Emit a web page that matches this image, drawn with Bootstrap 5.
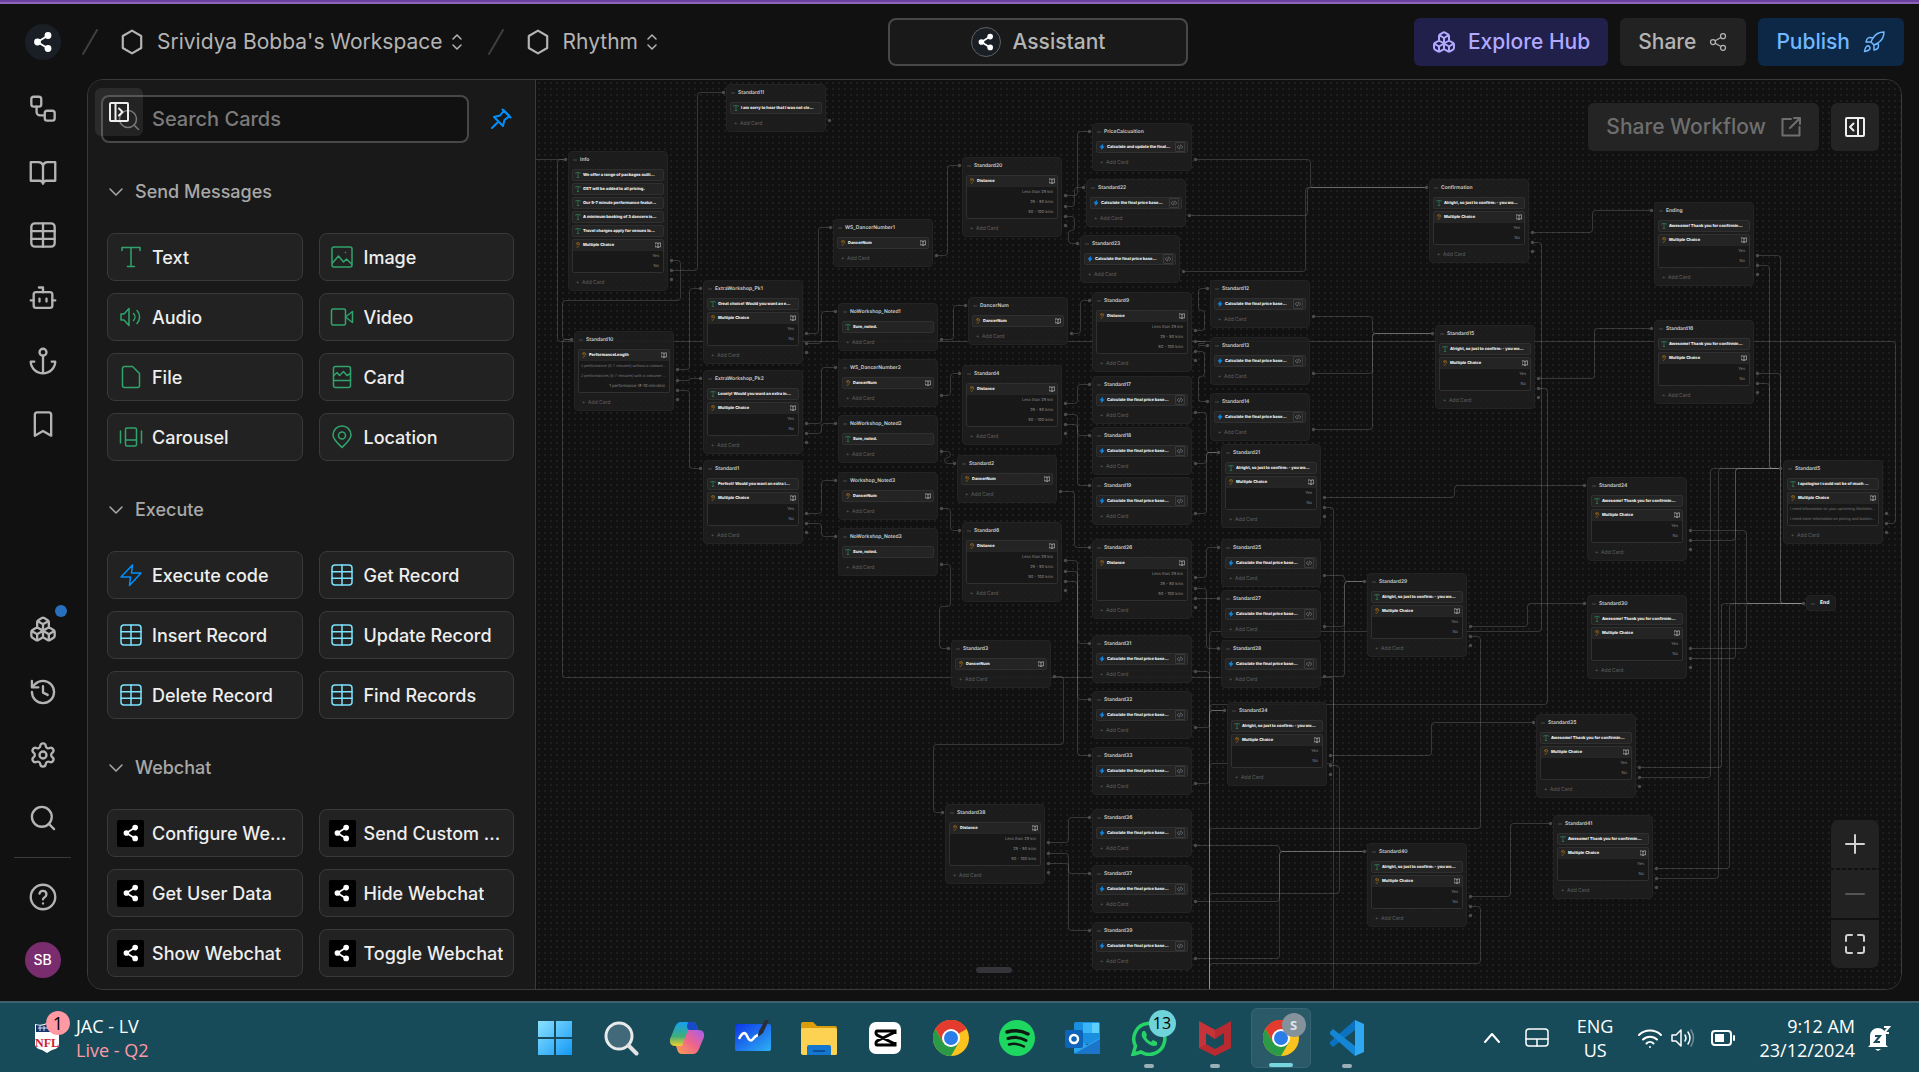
<!DOCTYPE html>
<html lang="en" data-bs-theme="dark">
<head>
<meta charset="utf-8">
<meta name="viewport" content="width=device-width, initial-scale=1">
<title>Rhythm - Workflow Studio</title>
<link href="https://cdn.jsdelivr.net/npm/bootstrap@5.3.0/dist/css/bootstrap.min.css" rel="stylesheet">
<style>
  :root { --ink:#eeeeee; --soft:#b4b4b4; --line:#3a3a3a; --panel:#191919; --tile:#222222; --page:#111111; --green:#30a46c; --blue:#0090ff; --sky:#7ce2fe; }
  body { background:var(--page); color:var(--soft); font-family:Inter,"Liberation Sans",sans-serif; font-size:18px; line-height:28px; overflow:hidden; }
  svg { display:block; flex:none; }
  .ico { fill:none; stroke:currentColor; stroke-width:2; stroke-linecap:round; stroke-linejoin:round; }
  .thin { stroke-width:1.5; }
  .s20 { width:20px; height:20px; } .s24 { width:24px; height:24px; } .s28 { width:28px; height:28px; }
  button { font-family:inherit; }
  .btn { --bs-btn-border-width:0; }
  .plain { background:none; border:0; padding:0; color:inherit; }

  .topstrip { height:4px; background:#6a40a0; border-bottom:2px solid #8b68b6; }
  .topbar { height:75px; padding:14px 15px 13px 25px; font-size:21px; font-weight:500; }
  .side-l { flex:1 1 0; } .side-r { flex:1 1 0; }
  .brandmark { width:36px; height:36px; border-radius:50%; background:#1a1f26; color:#fff; }
  .crumb-gap { margin-left:21px; margin-right:21px; color:#3f3f3f; }
  .assist { width:300px; height:48px; border:2px solid #484848; border-radius:8px; background:var(--panel); color:var(--soft); font-size:21px; font-weight:500; margin-left:147px; }
  .assist-mark { width:30px; height:30px; border-radius:50%; background:#1a1f26; border:1px solid #606060; color:#fff; }
  .bar-btn { height:48px; padding:0 18px; border-radius:6px; font-size:21px; font-weight:500; }
  .hub { background:#20204a; color:#b1a9ff; } .share { background:var(--tile); color:var(--soft); } .publish { background:#0d2847; color:#70b8ff; }

  .rail { width:87px; padding:16px 2px 23px 0; }
  .rail .plain { height:28px; }
  .rail-top { gap:35px; } .rail-end { gap:35px; }
  .rail-rule { width:57px; height:1px; background:var(--line); margin:25px 0; }
  .dot { position:absolute; width:12px; height:12px; border-radius:50%; background:#2870bd; right:-10px; top:-10px; }
  .face { width:36px; height:36px; border-radius:50%; background:#7a2d6e; color:#fff; font-size:14px; font-weight:500; margin-top:31px; }

  .studio { border:1px solid var(--line); border-radius:16px; overflow:hidden; margin:0 17px 11px 0; }
  .palette { width:448px; background:var(--panel); border-right:1px solid var(--line); padding:15px 21px 0 13px; position:relative; }
  .find { height:48px; border:2px solid #484848; border-radius:8px; background:#111; color:var(--ink); font-size:20px; padding:0 12px 0 49px; }
  .find::placeholder { color:#7b7b7b; opacity:1; font-weight:500; }
  .find-wrap { width:368px; }
  .glass { position:absolute; left:16px; top:13px; color:#6e6e6e; }
  .expand { position:absolute; left:7px; top:8px; width:48px; height:48px; border-radius:6px; background:rgba(255,255,255,.08); color:var(--ink); padding:14px; }
  .pin { color:var(--blue); margin-left:20px; }
  .group { margin:35px 0 27px 8px; font-size:18px; font-weight:500; color:#a8a8a8; line-height:28px; }
  .tiles { display:grid; grid-template-columns:1fr 1fr; gap:12px 16px; margin-left:6px; }
  .tile { height:48px; border:1px solid var(--line); border-radius:8px; background:var(--tile); color:var(--ink); font-size:18px; font-weight:500; padding:0 9px; gap:8px; min-width:0; }
  .tile .slot { width:27px; height:27px; display:flex; align-items:center; justify-content:center; flex:none; }
  .c-green { color:var(--green); } .c-blue { color:var(--blue); } .c-sky { color:var(--sky); }
  .c-chat { background:#000; color:#fff; border-radius:2px; }

  .stage { background-color:var(--page); background-image:radial-gradient(circle,#1f1f1f 1px,transparent 1px); background-size:6px 6px; position:relative; overflow:hidden; min-width:0; }
  .wires { position:absolute; left:0; top:0; width:100%; height:100%; fill:none; }
  .wires path { stroke:rgba(180,180,180,.23); stroke-width:1; }
  .wires circle { fill:#4c4c4c; }
  .node { position:absolute; width:100px; background:rgba(30,30,30,.9); border:1px solid #232323; border-radius:4px; padding:0 3px; font-size:4px; line-height:10px; color:#f2f2f2; text-rendering:geometricPrecision; }
  .node-name { height:17px; line-height:16px; font-size:5px; font-weight:600; padding-left:8px; color:#d0d0d0; position:relative; white-space:nowrap; }
  .node-name::before { content:""; position:absolute; left:1px; top:7px; width:4px; height:2px; background:#333; }
  .step { border:1px solid #303030; border-radius:2px; background:#242424; margin-bottom:2px; overflow:hidden; }
  .step:last-of-type { margin-bottom:0; }
  .step-row { height:10px; padding:0 2px; font-weight:800; white-space:nowrap; }
  .step svg { width:6px; height:6px; }
  .step-row > span { margin-left:2px; flex:1; }
  .picks { background:#181818; border-top:1px solid #262626; padding-bottom:1px; color:#8c8c8c; text-align:right; }
  .picks div { height:10px; padding:0 4px; white-space:nowrap; }
  .picks .longpick { text-align:left; padding:0 2px; font-family:"Liberation Sans",sans-serif; color:#777; }
  .codebox { border:1px solid #3a3a3a; border-radius:1px; padding:1px; color:#9a9a9a; }
  .addcard { display:block; height:17px; line-height:16px; font-size:5px; padding-left:4px; color:#606060; }
  .t-green { color:var(--green); } .t-ear { color:#c98212; } .t-blue { color:#1285dd; }
  .node.finish { width:30px; height:16px; }
  .finish .node-name { padding-left:10px; color:#fff; font-weight:700; line-height:15px; }
  .stage-tools { position:absolute; right:22px; top:23px; gap:12px; }
  .stage-btn { height:48px; border-radius:6px; background:rgba(38,38,38,.95); color:#6e6e6e; font-size:21px; font-weight:500; padding:0 18px; gap:15px; }
  .stage-btn.square { width:48px; padding:0 14px; color:var(--ink); }
  .zoomers { position:absolute; right:22px; bottom:21px; width:48px; border-radius:8px; overflow:hidden; gap:2px; }
  .zoomers button { height:48px; border:0; background:#222; color:#d0d0d0; padding:12px; }
  .zoomers button:disabled { color:#555; }
  .grip { position:absolute; left:440px; bottom:16px; width:36px; height:6px; border-radius:3px; background:#34343a; }

  .taskbar { background:#184b5a; border-top:2px solid #3e606c; height:71px; font-family:"Open Sans","Noto Sans",sans-serif; color:#fff; font-size:18px; line-height:24px; }
  .news { flex:1 1 0; padding-left:34px; gap:8px; }
  .news-art { position:relative; width:34px; height:44px; padding-top:6px; }
  .news-count { position:absolute; left:12px; top:-5px; width:24px; height:24px; border-radius:50%; background:#ff99a4; color:#000; text-align:center; font-size:18px; }
  .pinkish { color:#ff99a4; }
  .apps { gap:6px; margin-right:24px; }
  .app { position:relative; width:60px; height:60px; border-radius:6px; display:flex; align-items:center; justify-content:center; }
  .app svg { width:36px; height:36px; }
  .app.open { background:#2a5968; border:1px solid #386573; }
  .app.run::after, .app.open::after { content:""; position:absolute; bottom:0; width:10px; height:4px; border-radius:2px; background:#9ab0b6; }
  .app.open::after { width:24px; background:#76d5dd; }
  .bubble { position:absolute; right:3px; top:2px; width:27px; height:27px; border-radius:50%; background:#6fd3da; color:#000; font-size:16px; line-height:26px; text-align:center; }
  .bubble.grey { background:#84939b; color:#dfe5e7; font-size:13px; font-weight:700; width:24px; height:24px; line-height:24px; top:4px; right:4px; }
  .tray { flex:1 1 0; justify-content:flex-end; padding-right:28px; }
</style>
<script src="https://cdn.jsdelivr.net/npm/bootstrap@5.3.0/dist/js/bootstrap.bundle.min.js"></script>
</head>
<body class="d-flex flex-column vh-100">

<svg width="0" height="0" class="position-absolute" aria-hidden="true">
  <symbol id="hex" viewBox="0 0 24 24"><path d="M12 1.500 20.500 6.500v11L12 22.500 3.500 17.500v-11z"/></symbol>
  <symbol id="sort" viewBox="0 0 12 18"><path d="M2 6l4-4 4 4M2 12l4 4 4-4"/></symbol>
  <symbol id="slash" viewBox="0 0 16 26"><path d="M15 1 1 25"/></symbol>
  <symbol id="mark" viewBox="0 0 24 24"><g fill="currentColor" stroke="none"><circle cx="6.500" cy="12" r="3.400"/><circle cx="17" cy="5.500" r="3.400"/><circle cx="17" cy="18.500" r="3.400"/></g><path d="M17 5.500 6.500 12 17 18.500"/></symbol>
  <symbol id="nodes" viewBox="0 0 24 24"><circle cx="18" cy="5" r="3"/><circle cx="6" cy="12" r="3"/><circle cx="18" cy="19" r="3"/><path d="m8.600 13.500 6.800 4M15.400 6.500l-6.800 4"/></symbol>
  <symbol id="boxes" viewBox="0 0 24 24"><path d="M2.970 12.920A2 2 0 0 0 2 14.630v3.240a2 2 0 0 0 .970 1.710l3 1.800a2 2 0 0 0 2.060 0L12 19v-5.500l-5-3-4.030 2.420ZM7 16.500l-4.740-2.850M7 16.500l5-3M7 16.500v5.170M12 13.500V19l3.970 2.380a2 2 0 0 0 2.060 0l3-1.800a2 2 0 0 0 .970-1.710v-3.240a2 2 0 0 0-.970-1.710L17 10.500l-5 3ZM17 16.500l-5-3M17 16.500l4.740-2.850M17 16.500v5.170M7.970 4.420A2 2 0 0 0 7 6.130v4.370l5 3 5-3V6.130a2 2 0 0 0-.970-1.710l-3-1.800a2 2 0 0 0-2.060 0l-3 1.800ZM12 8 7.260 5.150M12 8l4.740-2.850M12 13.500V8"/></symbol>
  <symbol id="rocket" viewBox="0 0 24 24"><path d="M4.500 16.500c-1.500 1.260-2 5-2 5s3.740-.5 5-2c.71-.84.7-2.130-.09-2.910a2.180 2.180 0 0 0-2.910-.09zM12 15l-3-3a22 22 0 0 1 2-3.950A12.880 12.880 0 0 1 22 2c0 2.720-.78 7.500-6 11a22.350 22.350 0 0 1-4 2zM9 12H4s.55-3.030 2-4c1.620-1.080 5 0 5 0M12 15v5s3.030-.55 4-2c1.080-1.620 0-5 0-5"/></symbol>
  <symbol id="flow" viewBox="0 0 24 24"><rect x="2" y="1.500" width="8.500" height="8.500" rx="2"/><path d="M6.500 10v4.500a3 3 0 0 0 3 3h4"/><rect x="13.500" y="13.500" width="8.500" height="8.500" rx="2"/></symbol>
  <symbol id="book" viewBox="0 0 24 24"><path d="M1.500 3.500h6.500a4 4 0 0 1 4 3 4 4 0 0 1 4-3h6.500v16h-7.500a3 3 0 0 0-3 2.500 3 3 0 0 0-3-2.500H1.500zM12 6.500V22"/></symbol>
  <symbol id="table" viewBox="0 0 24 24"><rect x="2" y="2" width="20" height="20" rx="3"/><path d="M12 2v20M2 8.700h20M2 15.300h20"/></symbol>
  <symbol id="bot" viewBox="0 0 24 24"><path d="M12 7V3H8.500"/><rect x="4" y="7" width="16" height="13.500" rx="2"/><path d="M1.500 14H4M20 14h2.500M9 12.500v2.500M15 12.500v2.500"/></symbol>
  <symbol id="anchor" viewBox="0 0 24 24"><circle cx="12" cy="4.500" r="3"/><path d="M12 22.500v-15M4.500 12.500H1.500a10.500 10 0 0 0 21 0h-3"/></symbol>
  <symbol id="bookmark" viewBox="0 0 24 24"><path d="m19 22-7-4-7 4V4a2 2 0 0 1 2-2h10a2 2 0 0 1 2 2z"/></symbol>
  <symbol id="history" viewBox="0 0 24 24"><path d="M2.500 12a9.500 9.500 0 1 0 9.500-9.500 10.300 10.300 0 0 0-7 2.900L2.500 8M2.500 2.500V8H8M12 7v5.500l4 2"/></symbol>
  <symbol id="gear" viewBox="0 0 24 24"><path d="M9.671 4.136a2.340 2.340 0 0 1 4.659 0 2.340 2.340 0 0 0 3.319 1.915 2.340 2.340 0 0 1 2.330 4.033 2.340 2.340 0 0 0 0 3.831 2.340 2.340 0 0 1-2.330 4.033 2.340 2.340 0 0 0-3.319 1.915 2.340 2.340 0 0 1-4.659 0 2.340 2.340 0 0 0-3.320-1.915 2.340 2.340 0 0 1-2.330-4.033 2.340 2.340 0 0 0 0-3.831A2.340 2.340 0 0 1 6.350 6.051a2.340 2.340 0 0 0 3.319-1.915"/><circle cx="12" cy="12" r="3"/></symbol>
  <symbol id="search" viewBox="0 0 24 24"><circle cx="11" cy="11" r="8.500"/><path d="m21.500 21.500-4.500-4.500"/></symbol>
  <symbol id="help" viewBox="0 0 24 24"><circle cx="12" cy="12" r="10.500"/><path d="M9 9a3 3 0 0 1 5.900 1c0 2-2.900 2.500-2.900 4M12 17.400v.1"/></symbol>
  <symbol id="pin" viewBox="0 0 24 24"><path d="m15 3.500-4 5-6 1.500 9 9 1.500-6 5-4zM9 15l-6 6M13.500 2.500l8 8"/></symbol>
  <symbol id="chev" viewBox="0 0 14 14"><path d="m1 4 6 6 6-6"/></symbol>
  <symbol id="openpane" viewBox="0 0 20 20"><rect x="1" y="1" width="18" height="18" rx="1"/><path d="M6.500 1v18M10 6.500l3.500 3.500-3.500 3.500"/></symbol>
  <symbol id="closepane" viewBox="0 0 20 20"><rect x="1" y="1" width="18" height="18" rx="1"/><path d="M13 1v18M8.500 6.500 5 10l3.500 3.500"/></symbol>
  <symbol id="leave" viewBox="0 0 20 20"><path d="M10 2H1.500v16.500h17V10M13 1h6v6M19 1 9 11"/></symbol>
  <symbol id="tee" viewBox="0 0 24 24"><path d="M3 5.500V2.500h18v3M12 2.500v19M8.500 21.500h7"/></symbol>
  <symbol id="image" viewBox="0 0 24 24"><rect x="2" y="2" width="20" height="20" rx="2"/><path d="m2.500 18 6-7 5 6 3-3 5 5M15.500 7.500v.1"/></symbol>
  <symbol id="audio" viewBox="0 0 24 24"><path d="M2 9v6h3l5 5.500v-17L5 9zM14.500 8.500a5 5 0 0 1 0 7M18 5.500a9.500 9.500 0 0 1 0 13"/></symbol>
  <symbol id="video" viewBox="0 0 24 24"><rect x="1.500" y="4" width="14" height="16" rx="1.500"/><path d="m15.500 12 7-5.500v11z"/></symbol>
  <symbol id="file" viewBox="0 0 24 24"><path d="M3.500 3.500a2 2 0 0 1 2-2H13.500L20.500 8.500v12a2 2 0 0 1-2 2h-13a2 2 0 0 1-2-2z"/></symbol>
  <symbol id="cardpic" viewBox="0 0 24 24"><rect x="3.500" y="1.500" width="17" height="21" rx="2"/><path d="M3.500 15.500h17M3.500 11l3.500-3.500 2.500 3 4-4 3.500 4 3.500-2"/></symbol>
  <symbol id="carousel" viewBox="0 0 24 24"><rect x="6.500" y="3" width="11" height="18" rx="1.500"/><path d="M6.500 15h11M1.500 6v12M22.500 6v12"/></symbol>
  <symbol id="place" viewBox="0 0 24 24"><path d="M12 22.500c4-4 9-8 9-12.500a9 9 0 0 0-18 0c0 4.500 5 8.500 9 12.500z"/><circle cx="12" cy="10.500" r="3.500"/></symbol>
  <symbol id="bolt" viewBox="0 0 24 24"><path d="M13.500 2 2 14h9.500l-1 8.500L22 10h-9.500z"/></symbol>
  <symbol id="spark" viewBox="0 0 24 24"><path fill="currentColor" d="M14 2 3 12l6 2 1 8L21 11l-6-2z"/></symbol>
  <symbol id="ear" viewBox="0 0 24 24"><path d="M5 8a7 7 0 0 1 14 1c0 6-6 6-6 10a3.500 3.500 0 0 1-6 1.500M15 9a3 3 0 0 0-6 0c2 .5 2 3 0 4"/></symbol>
  <symbol id="code" viewBox="0 0 24 24"><path d="m6 6-5 6 5 6M18 6l5 6-5 6M14 4l-4 16"/></symbol>
  <symbol id="plus" viewBox="0 0 24 24"><path d="M12 3v18M3 12h18"/></symbol>
  <symbol id="minus" viewBox="0 0 24 24"><path d="M3 12h18"/></symbol>
  <symbol id="fit" viewBox="0 0 24 24"><path d="M3 9V5a2 2 0 0 1 2-2h4M15 3h4a2 2 0 0 1 2 2v4M21 15v4a2 2 0 0 1-2 2h-4M9 21H5a2 2 0 0 1-2-2v-4"/></symbol>
  <symbol id="chrome" viewBox="0 0 36 36"><circle cx="18" cy="18" r="18" fill="#fcc31e"/><path d="M18 18 2.400 9A18 18 0 0 1 33.600 9z" fill="#e33b2e"/><path d="M18 9h15.600A18 18 0 0 0 2.400 9L10.200 22.500z" fill="#e33b2e"/><path d="M2.400 9a18 18 0 0 0 15.600 27l7.800-13.500L18 18l-7.800 4.500z" fill="#2a9a47"/><circle cx="18" cy="18" r="9" fill="#fff"/><circle cx="18" cy="18" r="7" fill="#2b7de9"/></symbol>
</svg>

<div class="topstrip"></div>
<header class="topbar d-flex align-items-center">
  <div class="side-l d-flex align-items-center">
    <a href="#" class="brandmark d-flex align-items-center justify-content-center" aria-label="Home"><svg class="ico s24"><use href="#mark"/></svg></a>
    <svg class="ico crumb-gap" width="16" height="26"><use href="#slash"/></svg>
    <button class="plain d-flex align-items-center"><svg class="ico me-2" width="26" height="26"><use href="#hex"/></svg><span class="ms-1">Srividya Bobba's Workspace</span><svg class="ico thin ms-2 me-1" width="12" height="18"><use href="#sort"/></svg></button>
    <svg class="ico crumb-gap" width="16" height="26"><use href="#slash"/></svg>
    <button class="plain d-flex align-items-center"><svg class="ico me-2" width="26" height="26"><use href="#hex"/></svg><span class="ms-1">Rhythm</span><svg class="ico thin ms-2 me-1" width="12" height="18"><use href="#sort"/></svg></button>
  </div>
  <button class="assist d-flex align-items-center justify-content-center"><span class="assist-mark d-flex align-items-center justify-content-center me-2"><svg class="ico s20"><use href="#mark"/></svg></span><span class="ms-1">Assistant</span></button>
  <div class="side-r d-flex justify-content-end gap-2">
    <button class="btn bar-btn hub d-flex align-items-center me-1"><svg class="ico s24 me-2"><use href="#boxes"/></svg><span class="ms-1">Explore Hub</span></button>
    <button class="btn bar-btn share d-flex align-items-center me-1"><span class="me-2">Share</span><svg class="ico thin s20 ms-1"><use href="#nodes"/></svg></button>
    <button class="btn bar-btn publish d-flex align-items-center"><span class="me-2">Publish</span><svg class="ico thin s24 ms-1"><use href="#rocket"/></svg></button>
  </div>
</header>

<main class="d-flex flex-grow-1 overflow-hidden">
  <nav class="rail d-flex flex-column align-items-center flex-shrink-0">
    <div class="rail-top d-flex flex-column align-items-center">
      <button class="plain" aria-label="Workflows"><svg class="ico s28"><use href="#flow"/></svg></button>
      <button class="plain" aria-label="Knowledge bases"><svg class="ico s28"><use href="#book"/></svg></button>
      <button class="plain" aria-label="Tables"><svg class="ico s28"><use href="#table"/></svg></button>
      <button class="plain" aria-label="Agents"><svg class="ico s28"><use href="#bot"/></svg></button>
      <button class="plain" aria-label="Hooks"><svg class="ico s28"><use href="#anchor"/></svg></button>
      <button class="plain" aria-label="Library"><svg class="ico s28"><use href="#bookmark"/></svg></button>
    </div>
    <div class="rail-end d-flex flex-column align-items-center mt-auto">
      <button class="plain position-relative" aria-label="Hub"><svg class="ico s28"><use href="#boxes"/></svg><span class="dot"></span></button>
      <button class="plain" aria-label="Version history"><svg class="ico s28"><use href="#history"/></svg></button>
      <button class="plain" aria-label="Settings"><svg class="ico s28"><use href="#gear"/></svg></button>
      <button class="plain" aria-label="Search"><svg class="ico s28"><use href="#search"/></svg></button>
    </div>
    <div class="rail-rule"></div>
    <button class="plain" aria-label="Help"><svg class="ico s28"><use href="#help"/></svg></button>
    <div class="face d-flex align-items-center justify-content-center">SB</div>
  </nav>

  <div class="studio d-flex flex-grow-1">
    <aside class="palette flex-shrink-0">
      <div class="d-flex align-items-center">
        <div class="find-wrap position-relative">
          <input id="find" type="text" class="find w-100 d-block" placeholder="Search Cards">
          <label class="glass" for="find" aria-label="Search Cards"><svg class="ico thin s24"><use href="#search"/></svg></label>
        </div>
        <button class="plain pin" aria-label="Pin panel"><svg class="ico s24"><use href="#pin"/></svg></button>
      </div>
      <button class="btn expand" aria-label="Expand explorer"><svg class="ico s20"><use href="#openpane"/></svg></button>
      <div id="groups"></div>
    </aside>
    <section class="stage flex-grow-1" id="stage" aria-label="Workflow canvas">
      <svg class="wires" id="wires"></svg>
      <div class="stage-tools d-flex">
        <button class="btn stage-btn d-flex align-items-center">Share Workflow<svg class="ico s20"><use href="#leave"/></svg></button>
        <button class="btn stage-btn square d-flex align-items-center" aria-label="Toggle inspector"><svg class="ico s20"><use href="#closepane"/></svg></button>
      </div>
      <div class="zoomers d-flex flex-column">
        <button aria-label="Zoom in"><svg class="ico s24"><use href="#plus"/></svg></button>
        <button aria-label="Zoom out" disabled><svg class="ico s24"><use href="#minus"/></svg></button>
        <button aria-label="Fit to screen"><svg class="ico s24"><use href="#fit"/></svg></button>
      </div>
      <div class="grip"></div>
    </section>
  </div>
</main>

<footer class="taskbar d-flex align-items-center flex-shrink-0">
  <div class="news d-flex align-items-center">
    <div class="news-art">
      <svg width="26" height="32" viewBox="0 0 26 32"><path d="M1 2q6 2 12-1 6 3 12 1v21q-1 4-7 5l-5 3-5-3q-6-1-7-5z" fill="#fff"/><path d="M2 3q6 2 11-1 6 3 11 1v7H2z" fill="#16356e"/><path d="M4 6h18M6 4v5M10 4v5" stroke="#dbe3f0"/><text x="13" y="25" text-anchor="middle" font-family="Liberation Serif,serif" font-weight="700" font-size="12" fill="#d0202e">NFL</text></svg>
      <span class="news-count">1</span>
    </div>
    <div><div>JAC - LV</div><div class="pinkish">Live - Q2</div></div>
  </div>
  <div class="apps d-flex align-items-center">
    <a class="app" href="#" aria-label="Start"><svg viewBox="0 0 36 36"><defs><linearGradient id="win" x1="0" y1="0" x2="1" y2="1"><stop offset="0" stop-color="#8be1ff"/><stop offset="1" stop-color="#1399f5"/></linearGradient></defs><path fill="url(#win)" d="M1 1h16v16H1zM19 1h16v16H19zM1 19h16v16H1zM19 19h16v16H19z"/></svg></a>
    <a class="app" href="#" aria-label="Search"><svg viewBox="0 0 36 36" fill="none"><circle cx="16" cy="16" r="13" fill="#41697a" stroke="#e8eaeb" stroke-width="3"/><path d="m25.500 25.500 8 8" stroke="#e0e2e3" stroke-width="4" stroke-linecap="round"/></svg></a>
    <a class="app" href="#" aria-label="Copilot"><svg viewBox="0 0 36 36"><defs><linearGradient id="cpa" x1="0" y1="0" x2="0" y2="1"><stop offset="0" stop-color="#14a0f5"/><stop offset=".6" stop-color="#3fae7a"/><stop offset="1" stop-color="#f2cf2c"/></linearGradient><linearGradient id="cpb" x1="1" y1="0" x2="0" y2="1"><stop offset="0" stop-color="#a45cf0"/><stop offset=".5" stop-color="#f0648c"/><stop offset="1" stop-color="#ffa14a"/></linearGradient></defs><path d="M12 2h11q4 0 5 5l1 3h-6L17 26H6q-6 0-5-7L6 7q2-5 6-5z" fill="url(#cpa)"/><path d="M19 2h4q4 0 5 5l1 3h-8q-3 0-3-4z" fill="#1949c8"/><path d="M24 34H13q-4 0-5-5l-1-3h6l6-16h11q6 0 5 7l-5 12q-2 5-6 5z" fill="url(#cpb)"/></svg></a>
    <a class="app" href="#" aria-label="Whiteboard"><svg viewBox="0 0 36 36"><defs><linearGradient id="wb" x1="0" y1="0" x2="1" y2="1"><stop offset="0" stop-color="#0c35e8"/><stop offset="1" stop-color="#2fb1f4"/></linearGradient></defs><rect y="4" width="36" height="27" rx="2" fill="url(#wb)"/><path d="M4 19q5-10 8-3t6 3q2-3 5-4" fill="none" stroke="#fff" stroke-width="2.500"/><path d="M34 0 28 13l-5 4 1-6L30 0z" fill="#2b2c38"/></svg></a>
    <a class="app" href="#" aria-label="File Explorer"><svg viewBox="0 0 36 36"><path d="M0 4q0-2 2-2h10l4 4h18q2 0 2 2v6H0z" fill="#dc9d0c"/><path d="M0 34V10q0-2 2-2h32q2 0 2 2v24q0 1-2 1H2z" fill="#fdd252"/><path d="M6 35V27q0-2 2-2h20q2 0 2 2v8z" fill="#1377d0"/><path d="M12 30h12v2H12z" fill="#0d4f96"/></svg></a>
    <a class="app" href="#" aria-label="CapCut"><svg viewBox="0 0 36 36"><rect x="2" y="2" width="32" height="32" rx="7" fill="#fff"/><path d="M28 14V11H10q-1 0-1 2 0 1 1 2l18 9M28 22v3H10q-1 0-1-2 0-1 1-2l18-9" fill="none" stroke="#000" stroke-width="3"/></svg></a>
    <a class="app" href="#" aria-label="Chrome"><svg><use href="#chrome"/></svg></a>
    <a class="app" href="#" aria-label="Spotify"><svg viewBox="0 0 36 36"><circle cx="18" cy="18" r="18" fill="#1ed760"/><g fill="none" stroke="#0c1a10" stroke-linecap="round"><path d="M8 12q11-3.500 21 2" stroke-width="3.500"/><path d="M9 18.500q10-3 18 2" stroke-width="3"/><path d="M10 24.500q8-2 15 2" stroke-width="2.500"/></g></svg></a>
    <a class="app" href="#" aria-label="Outlook"><svg viewBox="0 0 36 36"><rect x="9" y="2" width="26" height="22" rx="2" fill="#1a8fe0"/><path d="M18 3h9v10h-9z" fill="#38b6f5"/><path d="M27 3h7v10h-7z" fill="#5ccfff"/><path d="M9 18l13 7 13-7v14q0 2-2 2H11q-2 0-2-2z" fill="#2aa4ec"/><path d="M9 34 35 19v13q0 2-2 2z" fill="#1b76c9"/><rect x="0" y="10" width="18" height="18" rx="2" fill="#0d64b8"/><circle cx="9" cy="19" r="4" fill="none" stroke="#fff" stroke-width="2.500"/></svg></a>
    <a class="app run" href="#" aria-label="WhatsApp"><svg viewBox="0 0 36 36" fill="none" stroke="#25d366"><path d="M2 34.500 4.500 26A15.500 15.500 0 1 1 10 32z" stroke-width="3.500"/><path d="M12 11q-4 4 3 11 7 6 11 3v-3l-4-2-2 2q-4-2-5-5l1-2-2-4z" fill="#25d366" stroke="none"/></svg><span class="bubble">13</span></a>
    <a class="app run" href="#" aria-label="McAfee"><svg viewBox="0 0 36 36"><path d="M2 1l16 9 16-9v27l-16 8-16-8z" fill="#b62a30"/><path d="M9 13l9 6 9-6v11l-9 5-9-5z" fill="#184b5a"/><path d="M2 1l16 9v9L9 13v11l-7 4z" fill="#c63338"/></svg></a>
    <a class="app open" href="#" aria-label="Chrome, Rhythm"><svg><use href="#chrome"/></svg><span class="bubble grey">S</span></a>
    <a class="app run" href="#" aria-label="Visual Studio Code"><svg viewBox="0 0 36 36"><path d="M26 0l9 4v28l-9 4z" fill="#2fa8f2"/><path d="M26 0v10L4 27l-3-3v-2z" fill="#0b72c0"/><path d="M26 36V26L4 9l-3 3v2z" fill="#1486d6"/></svg></a>
  </div>
  <div class="tray d-flex align-items-center">
    <svg class="ico me-3" width="18" height="18"><path d="m2 13 7-8 7 8"/></svg>
    <svg class="ico thin ms-2 me-4" width="24" height="20"><rect x="1" y="1" width="22" height="17" rx="3"/><path d="M1 11h22M12 11v7"/></svg>
    <div class="text-center ms-1 me-4">ENG<br>US</div>
    <svg class="ico me-2" width="26" height="22"><path d="M2 8a16 16 0 0 1 22 0M6 12.500a10 10 0 0 1 14 0M9.500 16.500a5 5 0 0 1 7 0M13 20v.1"/></svg>
    <svg class="ico thin me-3" width="24" height="22"><path d="M1 8v6h4l5 5V3L5 8zM14 8q2 3 0 6M17 5q4 6 0 12"/><path d="M20 3q5 8 0 16" stroke="#6f8d96"/></svg>
    <svg class="ico me-4" width="24" height="18"><rect x="1" y="2" width="19" height="14" rx="3"/><rect x="4" y="5" width="9" height="8" fill="#fff" stroke="none"/><path d="M23 7v4"/></svg>
    <div class="text-end me-2">9:12 AM<br>23/12/2024</div>
    <svg class="ms-1" width="24" height="26" viewBox="0 0 24 26"><path d="M3 20V11a8 8 0 0 1 8-8q7 0 8 8v9l2 2H1zM8 24h6l-3 2z" fill="#fff"/><path d="M8 11h5l-5 6h5" fill="none" stroke="#184b5a" stroke-width="2"/><path d="M17 2h5l-5 6h5" fill="none" stroke="#fff" stroke-width="2"/></svg>
  </div>
</footer>

<script>
/* Card palette */
const groups = [
  ["Send Messages", [["tee","green","Text"],["image","green","Image"],["audio","green","Audio"],["video","green","Video"],["file","green","File"],["cardpic","green","Card"],["carousel","green","Carousel"],["place","green","Location"]]],
  ["Execute", [["bolt","blue","Execute code"],["table","sky","Get Record"],["table","sky","Insert Record"],["table","sky","Update Record"],["table","sky","Delete Record"],["table","sky","Find Records"]]],
  ["Webchat", [["mark","chat","Configure We..."],["mark","chat","Send Custom ..."],["mark","chat","Get User Data"],["mark","chat","Hide Webchat"],["mark","chat","Show Webchat"],["mark","chat","Toggle Webchat"]]]
];
const icon = (name, cls) => `<svg class="ico ${cls}" viewBox="0 0 24 24"><use href="#${name}"/></svg>`;
document.getElementById("groups").innerHTML = groups.map(([title, items]) =>
  `<button class="plain group d-flex align-items-center"><svg class="ico thin me-2" width="14" height="14"><use href="#chev"/></svg><span class="ms-1">${title}</span></button>
   <div class="tiles">${items.map(([i, c, t]) =>
    `<button class="btn tile d-flex align-items-center"><span class="slot c-${c}">${icon(i, c === "chat" ? "s20" : "s24 thin")}</span><span class="text-truncate">${t}</span></button>`).join("")}</div>`).join("");

/* Steps used by the nodes: [kind, label, choices] */
const dist = [["ear","Distance",["Less than 25 km","25 - 50 kms","50 - 100 kms"]]];
const num = [["ear","DancerNum"]];
const noted = [["tee","Sure, noted."]];
const calc = [["spark","Calculate the final price base..."]];
const yesNo = ["ear","Multiple Choice",["Yes","No"]];
const ask = t => [["tee", t], yesNo];
const confirmed = ask("Alright, so just to confirm: - you wo...");
const thanks = ask("Awesome! Thank you for confirmin...");

/* name: [x, y, steps] */
const pan = { x: 536, y: 80 };
const nodes = {
  Standard11:[726,84,[["tee","I am sorry to hear that I was not cle..."]]],
  Info:[568,151,[["tee","We offer a range of packages outli..."],["tee","GST will be added to all pricing."],["tee","Our 5-7 minute performance featur..."],["tee","A minimum booking of 3 dancers is..."],["tee","Travel charges apply for venues lo..."],yesNo]],
  Standard10:[574,331,[["ear","PerformanceLength",["1 performance (5-7 minutes) without a costum...","2 performances (5-7 minutes) with a costume ...","1 performance (8-10 minutes)"]]]],
  ExtraWorkshop_Pk1:[703,280,ask("Great choice! Would you want an e...")],
  ExtraWorkshop_Pk2:[703,370,ask("Lovely! Would you want an extra in...")],
  Standard1:[703,460,ask("Perfect! Would you want an extra i...")],
  WS_DancerNumber1:[833,219,num], NoWorkshop_Noted1:[838,303,noted], WS_DancerNumber2:[838,359,num],
  NoWorkshop_Noted2:[838,415,noted], Workshop_Noted3:[838,472,num], NoWorkshop_Noted3:[838,528,noted],
  Standard20:[962,157,dist], DancerNum:[968,297,num], Standard4:[962,365,dist], Standard2:[957,455,num],
  Standard6:[962,522,dist], Standard3:[951,640,num], Standard38:[945,804,dist],
  PriceCalcualtion:[1092,123,[["spark","Calculate and update the final..."]]],
  Standard22:[1086,179,calc], Standard23:[1080,235,calc], Standard9:[1092,292,dist],
  Standard12:[1210,280,calc], Standard13:[1210,337,calc], Standard14:[1210,393,calc],
  Standard17:[1092,376,calc], Standard18:[1092,427,calc], Standard19:[1092,477,calc],
  Standard21:[1221,444,confirmed], Standard26:[1092,539,dist],
  Standard25:[1221,539,calc], Standard27:[1221,590,calc], Standard28:[1221,640,calc],
  Standard31:[1092,635,calc], Standard32:[1092,691,calc], Standard33:[1092,747,calc],
  Standard34:[1227,702,confirmed], Standard36:[1092,809,calc], Standard37:[1092,865,calc], Standard39:[1092,922,calc],
  Standard40:[1367,843,confirmed], Standard29:[1367,573,confirmed], Confirmation:[1429,179,confirmed], Standard15:[1435,325,confirmed],
  Ending:[1654,202,thanks], Standard16:[1654,320,thanks], Standard24:[1587,477,thanks], Standard30:[1587,595,thanks],
  Standard35:[1536,714,thanks], Standard41:[1553,815,thanks],
  Standard5:[1783,460,[["tee","I apologise I could not be of much ..."],["ear","Multiple Choice",["I need information on your upcoming Worksho...","I need more information on pricing and bookin..."]]]],
  End:[1806,595,[]]
};
const tint = { tee:"t-green", ear:"t-ear", spark:"t-blue" };
const stepHtml = ([kind, label, picks]) => `<div class="step"><div class="step-row d-flex align-items-center">${icon(kind, tint[kind])}<span>${label}</span>${
  kind === "ear" ? icon("book", "") : kind === "spark" ? `<i class="codebox">${icon("code", "")}</i>` : ""}</div>${
  picks ? `<div class="picks">${picks.map(p => `<div class="${p.length > 40 ? "longpick" : ""}">${p}</div>`).join("")}</div>` : ""}</div>`;
document.getElementById("wires").insertAdjacentHTML("afterend", Object.entries(nodes).map(([name, [x, y, steps]]) =>
  `<article class="node ${steps.length ? "" : "finish"}" style="left:${x - pan.x}px;top:${y - pan.y}px"><div class="node-name">${name}</div>${steps.map(stepHtml).join("")}${
    steps.length ? `<button class="plain addcard">+&nbsp; Add Card</button>` : ""}</article>`).join(""));

/* Wires: [from, port, to, x] or [from, port, to, x, y, x2] when the wire turns back */
const S = n => "Standard" + n, P1 = "ExtraWorkshop_Pk1", P2 = "ExtraWorkshop_Pk2";
const wires = [
  ["Info",0,S(10),680,300,562],["Info",1,S(11),697],[S(5),1,"Info",1895,341,557],
  [S(10),0,P1,689],[S(10),1,P2,689],[S(10),2,S(1),689],
  [P1,0,"WS_DancerNumber1",818],[P1,1,"NoWorkshop_Noted1",821],[P2,0,"WS_DancerNumber2",821],[P2,1,"NoWorkshop_Noted2",821],
  [S(1),0,"Workshop_Noted3",821],[S(1),1,"NoWorkshop_Noted3",821],
  ["WS_DancerNumber1",0,S(20),947],["NoWorkshop_Noted1",0,"DancerNum",953],["WS_DancerNumber2",0,S(4),950],
  ["NoWorkshop_Noted2",0,S(2),950,457,944],["Workshop_Noted3",0,S(6),950],["NoWorkshop_Noted3",0,S(3),950,606,939],
  [S(3),0,S(38),1063,744,933],["DancerNum",0,S(9),1080],
  [S(20),0,"PriceCalcualtion",1077],[S(20),1,S(22),1074],[S(20),2,S(23),1074,230,1068],
  [S(4),0,S(17),1077],[S(4),1,S(18),1077],[S(4),2,S(19),1077],[S(2),0,S(26),1074],
  [S(6),0,S(31),1077],[S(6),1,S(32),1077],[S(6),2,S(33),1077],
  [S(9),0,S(12),1204,310,1198],[S(9),1,S(13),1204,343,1198],[S(9),2,S(14),1204,376,1198],
  [S(17),0,S(21),1206],[S(18),0,S(21),1206],[S(19),0,S(21),1206],
  [S(26),0,S(25),1206],[S(26),1,S(28),1206],[S(26),2,S(27),1206],
  [S(25),0,S(29),1344],[S(27),0,S(29),1344],[S(28),0,S(29),1344],
  [S(31),0,S(34),1209],[S(32),0,S(34),1209],[S(33),0,S(34),1209],
  [S(36),0,S(40),1279],[S(37),0,S(40),1279],[S(39),0,S(40),1279],
  [S(38),0,S(36),1068],[S(38),1,S(37),1068],[S(38),2,S(39),1068],
  ["PriceCalcualtion",0,"Confirmation",1310],[S(22),0,"Confirmation",1307],[S(23),0,"Confirmation",1305],
  [S(12),0,S(15),1372],[S(13),0,S(15),1372],[S(14),0,S(15),1372],
  ["Confirmation",0,"Ending",1592],[S(15),0,S(16),1594],[S(21),0,S(24),1454],[S(29),0,S(30),1527],[S(34),0,S(35),1431],[S(40),0,S(41),1510],
  ["Ending",0,"End",1780],["Ending",1,S(5),1769],[S(16),0,"End",1780],[S(16),1,S(5),1769],
  [S(24),0,"End",1746],[S(24),1,S(5),1735],[S(30),0,"End",1746],[S(30),1,S(5),1735],
  [S(35),0,"End",1721],[S(35),1,S(5),1710],[S(41),0,"End",1729],[S(41),1,S(5),1718]
];
const height = n => nodes[n][2].reduce((h, s) => h + (s[2] ? 14 + 10 * s[2].length : 12) + 2, 34);
const choices = n => (nodes[n][2].find(s => s[2]) || [])[2]?.length || 0;
const outPort = (n, i) => {
  const [x, y] = nodes[n], c = choices(n), base = y + height(n) - 12;
  return [x + 103, Math.round(i >= c ? base : base - 9 - 10.5 * (c - 1 - i))];
};
const inPort = n => [nodes[n][0] - 3, nodes[n][1] + 8];
/* orthogonal polyline with rounded corners */
const route = pts => {
  const p = pts.map(([x, y]) => [x - pan.x + .5, y - pan.y + .5]);
  let d = `M${p[0]}`;
  for (let i = 1; i < p.length - 1; i++) {
    const a = p[i - 1], b = p[i], c = p[i + 1];
    const ab = Math.hypot(b[0] - a[0], b[1] - a[1]), bc = Math.hypot(c[0] - b[0], c[1] - b[1]), r = Math.min(3, ab / 2, bc / 2);
    if (!ab || !bc) continue;
    d += `L${b[0] + (a[0] - b[0]) * r / ab},${b[1] + (a[1] - b[1]) * r / ab}Q${b},${b[0] + (c[0] - b[0]) * r / bc},${b[1] + (c[1] - b[1]) * r / bc}`;
  }
  return `<path d="${d}L${p[p.length - 1]}"/>`;
};
let art = route([[530,159],[565,159]]) + route([[1333,1100],[1333,677],[562,677],[562,339],[571,339]]);
for (const [f, i, t, x, y, x2] of wires) {
  const a = outPort(f, i), b = inPort(t);
  art += route(y === undefined ? [a, [x, a[1]], [x, b[1]], b] : [a, [x, a[1]], [x, y], [x2, y], [x2, b[1]], b]);
}
for (const [f, x, y] of [["Confirmation",1541,631],[S(15),1547,704],[S(21),1333,763],[S(29),1480,828],[S(34),1339,893],[S(40),1480,963]]) {
  const a = outPort(f, 1);
  art += route([a, [x, a[1]], [x, y], [1209, y], [1209, 1100]]);
}
for (const n in nodes) {
  const spots = [inPort(n)];
  if (n !== "End") for (let i = 0; i <= choices(n); i++) spots.push(outPort(n, i));
  art += spots.map(([x, y]) => `<circle cx="${x - pan.x + .5}" cy="${y - pan.y + .5}" r="1.700"/>`).join("");
}
document.getElementById("wires").innerHTML = art;
</script>
</body>
</html>
